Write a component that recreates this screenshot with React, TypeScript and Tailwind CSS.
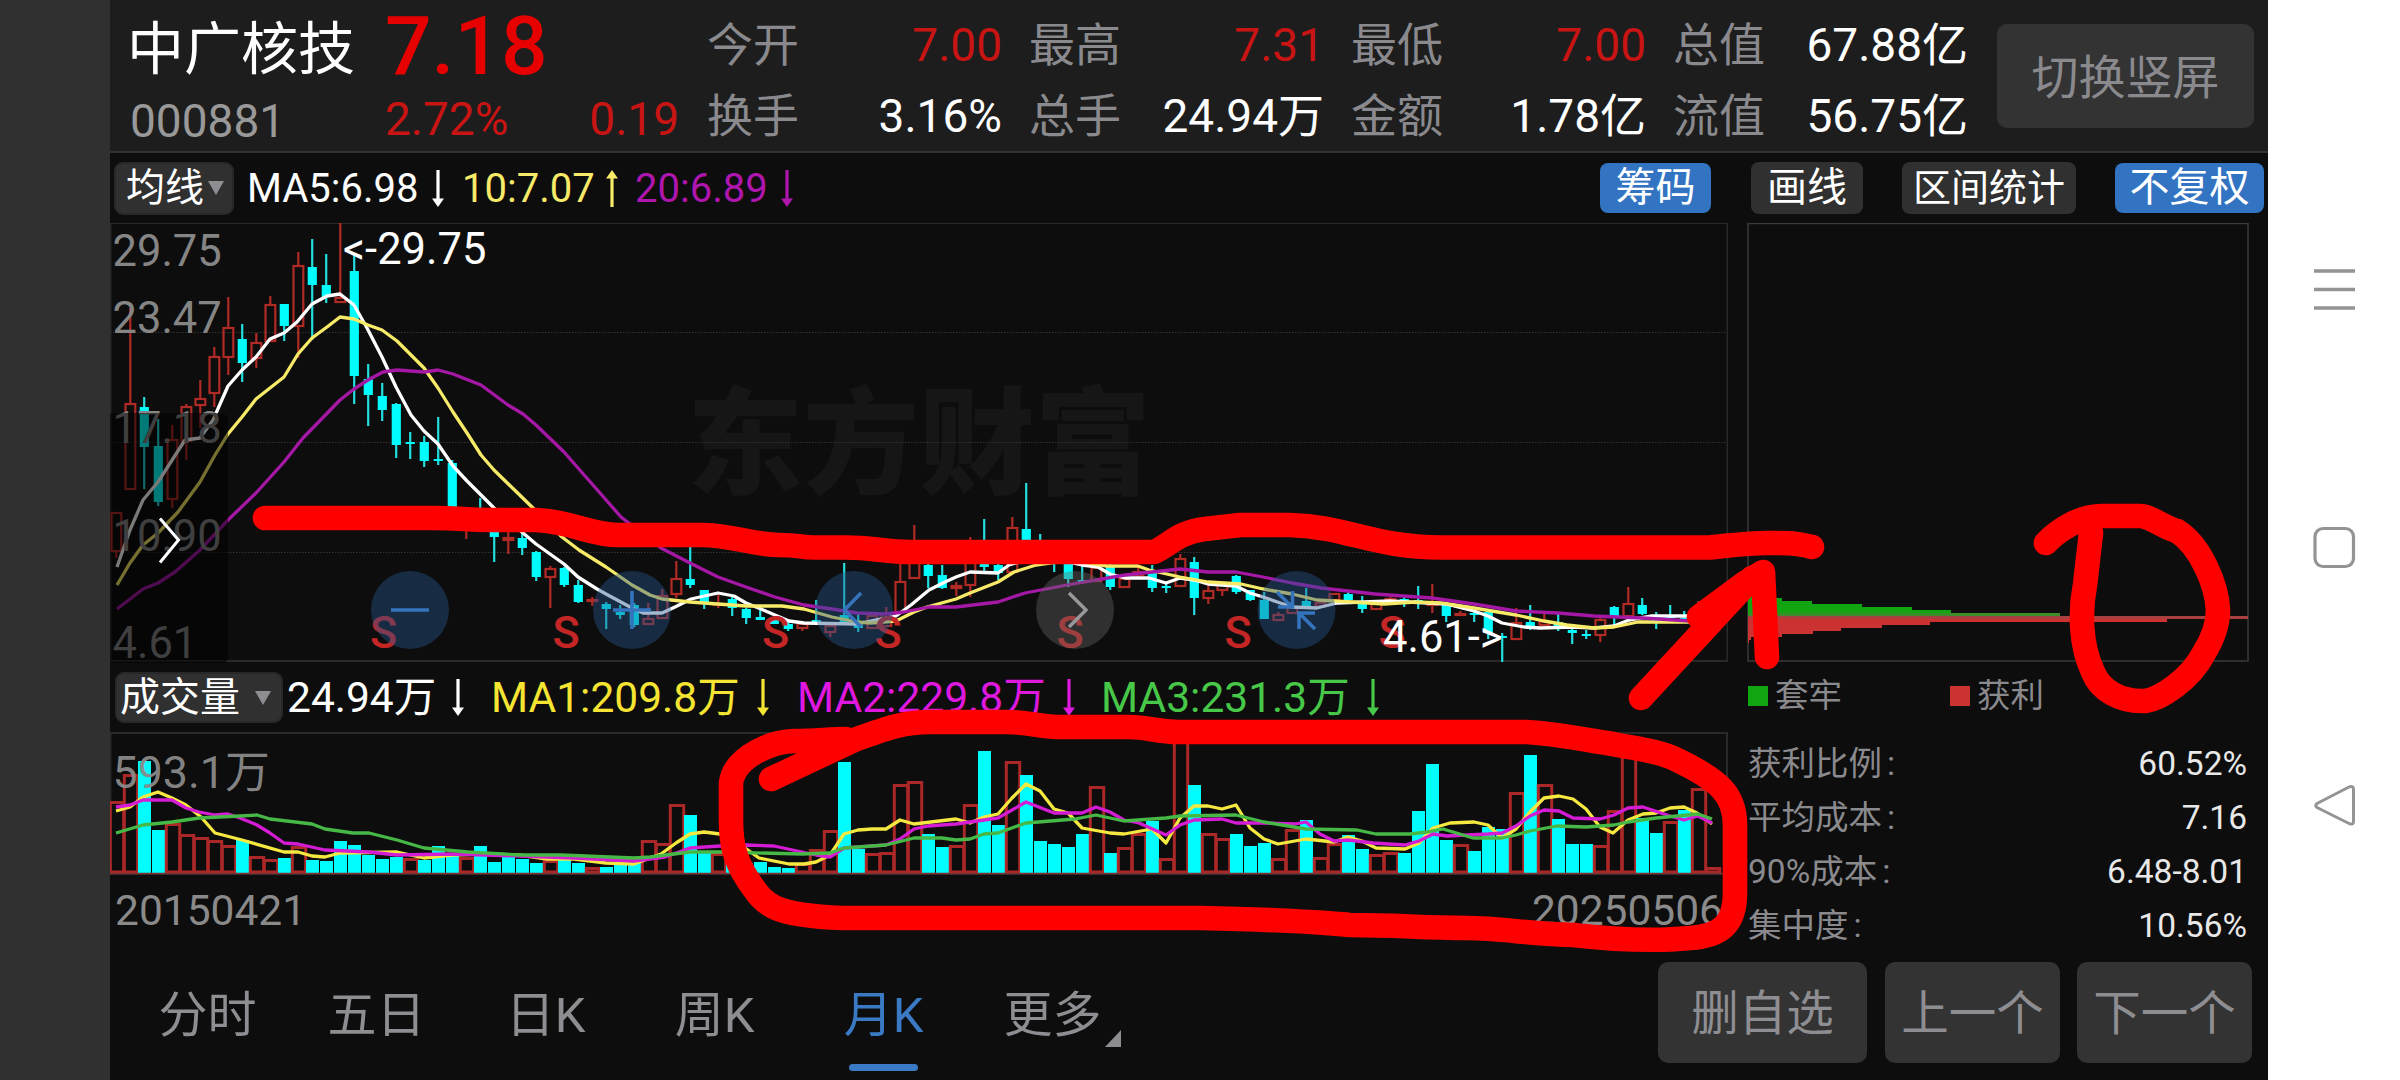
import React from 'react';

type Candle = [kind: 'r' | 'c', high: number, top: number, bottom: number, low: number];

const STEP = 14;
const FIRST_X = 116.3;

const candles: Candle[] = [
  ['r', 512, 512, 552, 558], ['r', 308, 403, 490, 490], ['c', 397, 407, 447, 489], ['c', 419, 446, 502, 506],
  ['r', 425, 439, 500, 508], ['r', 404, 406, 442, 460], ['r', 380, 398, 406, 428], ['r', 347, 356, 394, 407],
  ['r', 297, 327, 358, 375], ['c', 324, 339, 363, 382], ['r', 333, 342, 359, 368], ['r', 296, 304, 342, 342],
  ['c', 304, 304, 326, 341], ['r', 252, 265, 327, 358], ['c', 239, 267, 285, 340], ['c', 254, 285, 297, 303],
  ['r', 223, 297, 303, 303], ['c', 253, 271, 376, 404], ['c', 364, 379, 395, 426], ['c', 383, 396, 410, 421],
  ['c', 403, 404, 445, 458], ['c', 432, 442, 444, 459], ['c', 436, 442, 461, 467], ['c', 417, 459, 461, 465],
  ['c', 460, 463, 510, 510], ['r', 515, 520, 530, 539], ['c', 498, 512, 530, 530], ['c', 510, 515, 537, 562],
  ['r', 532, 537, 541, 554], ['c', 533, 538, 548, 555], ['c', 551, 552, 577, 581], ['r', 566, 568, 578, 608],
  ['c', 567, 568, 585, 587], ['c', 580, 585, 602, 603], ['r', 597, 599, 602, 606], ['c', 602, 604, 609, 629],
  ['c', 605, 612, 615, 619], ['c', 603, 605, 625, 627], ['r', 603, 618, 625, 625], ['r', 589, 595, 619, 619],
  ['r', 561, 578, 595, 598], ['c', 547, 579, 585, 588], ['c', 590, 590, 604, 609], ['r', 595, 603, 604, 608],
  ['c', 597, 599, 608, 616], ['c', 608, 609, 618, 624], ['c', 607, 617, 620, 620], ['c', 620, 620, 624, 624],
  ['c', 622, 624, 629, 631], ['r', 621, 623, 629, 631], ['c', 600, 620, 623, 623], ['r', 622, 625, 633, 637],
  ['c', 563, 615, 622, 622], ['c', 613, 625, 628, 632], ['r', 615, 615, 629, 629], ['r', 607, 613, 627, 627],
  ['r', 560, 581, 613, 613], ['r', 525, 545, 579, 579], ['c', 560, 565, 576, 588], ['c', 565, 575, 588, 589],
  ['r', 582, 585, 589, 596], ['r', 537, 560, 586, 597], ['c', 519, 550, 567, 571], ['c', 560, 565, 573, 580],
  ['r', 517, 527, 573, 573], ['c', 483, 529, 560, 560], ['c', 534, 545, 558, 560], ['c', 545, 550, 560, 572],
  ['c', 555, 560, 579, 587], ['c', 560, 580, 582, 582], ['r', 567, 567, 582, 582], ['c', 563, 565, 587, 590],
  ['r', 576, 578, 588, 588], ['r', 567, 571, 576, 578], ['c', 565, 572, 588, 592], ['c', 583, 586, 588, 593],
  ['r', 554, 558, 587, 587], ['c', 557, 562, 598, 615], ['r', 585, 590, 599, 604], ['r', 583, 583, 591, 596],
  ['c', 575, 576, 592, 594], ['c', 590, 590, 600, 601], ['c', 592, 600, 619, 619], ['r', 612, 614, 621, 621],
  ['r', 598, 607, 614, 614], ['c', 588, 601, 608, 608], ['r', 600, 602, 607, 607], ['r', 593, 593, 601, 601],
  ['c', 592, 594, 600, 600], ['c', 596, 601, 609, 613], ['r', 602, 603, 610, 610], ['r', 597, 598, 602, 603],
  ['c', 597, 599, 603, 607], ['c', 586, 600, 602, 609], ['r', 584, 603, 605, 613], ['c', 604, 604, 616, 622],
  ['r', 611, 613, 616, 616], ['c', 610, 613, 615, 622], ['c', 611, 612, 633, 639], ['c', 633, 636, 638, 662],
  ['r', 608, 622, 640, 640], ['c', 605, 622, 627, 630], ['r', 613, 621, 626, 626], ['c', 613, 622, 627, 631],
  ['c', 628, 630, 633, 644], ['c', 630, 634, 636, 639], ['r', 617, 619, 636, 642], ['c', 606, 607, 616, 625],
  ['r', 587, 603, 617, 620], ['c', 598, 605, 614, 615], ['c', 612, 620, 622, 629], ['c', 605, 616, 618, 620],
  ['c', 611, 618, 620, 621], ['r', 601, 607, 620, 620], ['r', 612, 613, 618, 618],
];

const volumes =
  'r800 r773 c760 c829 r822 r833 r836 r839 r844 c839 r855 r858 c857 r845 c859 c860 c840 c844 c854 c858 c856 r857 c859 c845 c854 r856 c845 c861 c855 c858 c862 r859 c858 c862 r866 c866 c863 c862 r839 r842 r803 c814 c852 r852 c860 c862 c861 c866 c867 r862 r848 r829 c761 c848 r852 r851 r783 r780 c833 c846 r844 r803 c750 c824 r760 c774 c840 c843 c846 c833 r785 c852 r846 r832 c820 r857 r740 c784 r832 r837 c833 c845 c842 r857 r828 c819 r856 r842 c834 c848 r853 r851 c852 c810 c763 c839 r843 c850 c826 c828 r791 c754 r783 c818 c843 c843 r844 r809 r740 c817 c832 r820 c809 r787 r866'
    .split(' ')
    .map((v) => ({ up: v[0] === 'r', top: Number(v.slice(1)) }));

const ma5 =
  '117,567 130,530 143,500 158,482 185,440 200,438 213,420 228,386 242,370 256,357 270,339 284,333 297,322 312,304 327,296 340,294 354,305 367,328 382,357 396,387 411,415 424,431 438,444 453,466 467,481 494,508 523,533 536,544 564,564 578,577 597,589 606,594 632,608 643,613 662,613 675,607 691,599 718,593 734,596 746,603 761,609 775,615 789,621 804,623 857,624 875,620 896,616 911,605 929,590 945,582 956,577 970,572 998,573 1009,565 1040,556 1082,565 1098,567 1110,574 1125,578 1149,578 1166,583 1180,578 1194,580 1208,584 1236,586 1250,593 1263,597 1292,607 1317,608 1337,603 1390,601 1446,604 1474,611 1488,616 1502,623 1524,627 1540,628 1573,627 1594,628 1614,626 1629,620 1652,616 1690,616';
const ma10 =
  '117,585 130,563 143,545 158,533 178,512 200,482 215,455 228,434 242,417 256,399 270,388 284,377 298,354 312,338 327,327 340,317 354,319 368,325 382,330 397,341 424,368 438,388 453,412 467,433 481,455 494,470 533,508 562,537 579,550 606,567 632,585 650,595 662,599 690,602 718,604 746,606 782,606 804,609 832,617 857,622 871,623 896,621 914,612 927,607 956,599 970,593 998,582 1014,572 1036,565 1070,560 1107,566 1138,566 1149,570 1180,577 1208,582 1241,584 1263,589 1292,594 1317,600 1352,602 1384,604 1415,602 1442,603 1474,608 1516,615 1544,621 1567,625 1594,628 1614,627 1638,622 1690,622';
const ma20 =
  '117,609 143,589 158,583 175,572 200,550 228,520 256,493 284,462 303,438 340,400 354,389 368,380 383,372 397,370 424,372 438,370 453,374 481,385 508,405 523,414 536,425 564,452 578,468 600,493 621,517 661,548 690,563 718,577 746,587 775,597 804,605 832,609 857,613 886,614 904,612 929,607 956,607 998,602 1025,593 1067,585 1125,575 1152,572 1180,569 1208,572 1236,572 1263,577 1292,583 1321,588 1375,594 1432,598 1474,604 1516,611 1558,613 1594,616 1643,618 1690,621';

const volMa1 =
  '116,810 130,806 143,796 158,791 172,797 186,804 201,816 215,832 242,839 284,851 298,851 312,855 325,856 340,852 397,851 424,857 452,854 480,853 519,854 547,858 574,858 606,862 634,863 661,853 676,842 690,833 704,831 720,833 732,838 745,847 759,857 789,863 804,863 816,861 830,854 844,833 858,829 872,828 886,828 900,819 914,823 956,818 970,822 984,816 998,813 1012,797 1026,783 1040,790 1054,808 1068,812 1082,827 1110,832 1124,833 1152,828 1166,842 1180,817 1194,805 1208,805 1222,808 1236,804 1250,827 1264,838 1278,843 1306,838 1334,841 1348,836 1362,840 1376,847 1405,848 1419,842 1433,827 1450,822 1474,821 1488,824 1502,837 1516,828 1530,811 1544,797 1559,795 1573,798 1586,808 1600,826 1613,832 1628,819 1643,813 1656,812 1670,807 1684,806 1697,812 1712,823';
const volMa2 =
  '116,806 130,804 143,799 172,799 186,807 199,811 215,814 228,813 240,817 257,824 270,832 284,842 298,843 325,849 369,851 397,854 452,853 519,855 574,857 634,860 665,856 690,847 720,845 746,844 774,845 802,851 816,854 830,856 844,847 886,844 900,838 914,828 928,825 956,823 998,817 1026,801 1054,812 1082,812 1096,806 1110,811 1124,819 1139,822 1166,834 1180,824 1194,819 1222,818 1236,822 1264,822 1295,823 1306,821 1320,833 1334,840 1348,839 1373,842 1405,844 1419,840 1433,833 1447,835 1488,833 1502,832 1516,825 1530,815 1544,809 1559,810 1573,817 1600,818 1614,814 1628,807 1643,806 1670,815 1684,819 1698,815 1712,822';
const volMa3 =
  '116,832 143,824 172,821 199,817 240,815 257,814 270,818 312,823 325,828 353,832 369,832 397,839 424,847 468,851 519,854 561,854 634,857 650,856 690,851 720,851 802,853 830,852 844,847 886,844 914,837 942,837 956,839 970,838 984,833 998,832 1026,822 1075,818 1096,814 1124,820 1166,817 1180,815 1236,814 1264,821 1306,828 1357,829 1376,833 1410,833 1427,831 1443,828 1473,837 1502,837 1516,834 1530,830 1557,825 1586,826 1614,824 1628,821 1656,817 1698,813 1712,818';

const quotes = [
  [{ label: '今开', value: '7.00', tone: 'text-[#c91414]' }, { label: '换手', value: '3.16%', tone: 'text-white' }],
  [{ label: '最高', value: '7.31', tone: 'text-[#c91414]' }, { label: '总手', value: '24.94万', tone: 'text-white' }],
  [{ label: '最低', value: '7.00', tone: 'text-[#c91414]' }, { label: '金额', value: '1.78亿', tone: 'text-white' }],
  [{ label: '总值', value: '67.88亿', tone: 'text-white' }, { label: '流值', value: '56.75亿', tone: 'text-white' }],
];

function Arrow({ up = false }: { up?: boolean }) {
  return (
    <svg className={up ? 'h-[37px] w-[12px] rotate-180' : 'h-[37px] w-[12px]'} viewBox="0 0 12 37" fill="currentColor">
      <path d="M4.4 0h3.2v28.500H12L6 37 0 28.500h4.400z" />
    </svg>
  );
}

function Caret() {
  return (
    <svg className="h-[14px] w-[16px] text-[#8e8e92]" viewBox="0 0 16 14" fill="currentColor">
      <path d="M0 0h16L8 14z" />
    </svg>
  );
}

function Header() {
  return (
    <header className="flex h-[153px] shrink-0 border-b-2 border-[#323232] bg-[#1d1d1d]">
      <div className="flex w-[257px] flex-col pl-[17px]">
        <div className="mt-[7px] h-[86px] text-[57px] leading-[86px] whitespace-nowrap text-white">中广核技</div>
        <div className="pl-[3px] text-[46px] leading-[56px] text-[#999]">000881</div>
      </div>
      <div className="flex w-[314px] flex-col pl-[18px]">
        <div className="-mt-[4px] h-[100px] text-[82px] leading-[100px] font-medium text-[#e60000]">7.18</div>
        <div className="-mt-[5px] flex justify-between pr-[2px] text-[46px] leading-[56px] text-[#c91414]">
          <span>2.72%</span>
          <span>0.19</span>
        </div>
      </div>
      <div className="ml-[26px] flex gap-[27px]">
        {quotes.map((col) => (
          <div key={col[0].label} className="flex w-[295px] flex-col pt-[9px]">
            {col.map((q) => (
              <div key={q.label} className="flex h-[71px] items-center justify-between text-[46px] leading-[70px] whitespace-nowrap">
                <span className="text-[#8a8a8e]">{q.label}</span>
                <span className={q.tone}>{q.value}</span>
              </div>
            ))}
          </div>
        ))}
      </div>
      <button className="mt-[24px] ml-[29px] h-[104px] w-[257px] rounded-[10px] bg-[#333] pt-[2px] text-[47px] leading-[104px] text-[#8a8a8e]">
        切换竖屏
      </button>
    </header>
  );
}

function Toolbar() {
  return (
    <div className="flex h-[70px] shrink-0 items-center text-[40px] leading-[50px] whitespace-nowrap">
      <button className="ml-[4px] flex h-[53px] w-[120px] items-center gap-[4px] rounded-[9px] border-2 border-[#282828] bg-[#303030] pl-[10px] text-[39px] text-white">
        均线
        <Caret />
      </button>
      <div className="ml-[13px] flex w-[197px] items-center justify-between pt-[1px] text-white">
        MA5:6.98 <Arrow />
      </div>
      <div className="ml-[18px] flex w-[156px] items-center justify-between pt-[1px] text-[#f7ea68]">
        10:7.07 <Arrow up />
      </div>
      <div className="ml-[17px] flex w-[158px] items-center justify-between pt-[1px] text-[#ae16ae]">
        20:6.89 <Arrow />
      </div>
      <div className="ml-auto flex items-center pr-[4px] text-white">
        <button className="h-[50px] w-[111px] rounded-[8px] bg-[#3274c2]">筹码</button>
        <button className="ml-[40px] h-[52px] w-[112px] rounded-[8px] bg-[#303030]">画线</button>
        <button className="ml-[39px] h-[52px] w-[174px] rounded-[8px] bg-[#303030] text-[38px]">区间统计</button>
        <button className="ml-[39px] h-[50px] w-[149px] rounded-[8px] bg-[#3274c2]">不复权</button>
      </div>
    </div>
  );
}

function PriceChart() {
  return (
    <svg className="block h-[440px] w-[1618px]" viewBox="110 223 1618 440">
      <text x="687" y="485" fontSize="116" fontWeight="900" fill="#161616">东方财富</text>
      <rect x="110.5" y="223" width="1617" height="438" fill="none" stroke="#292929" strokeWidth="2" />
      {[332.5, 442.5, 552.5].map((y) => (
        <line key={y} x1="110" x2="1727" y1={y} y2={y} stroke="#323232" strokeWidth="1" strokeDasharray="1.5 1.5" />
      ))}
      {candles.map(([kind, high, top, bottom, low], i) => {
        const x = FIRST_X + i * STEP;
        return kind === 'c' ? (
          <g key={i} fill="#00fcfc">
            <rect x={x - 1.2} y={high} width="2.2" height={low - high} fill="#22dede" />
            <rect x={x - 4.6} y={top} width="9.2" height={bottom - top} />
          </g>
        ) : (
          <g key={i} fill="none" stroke="#b02a26" strokeWidth="2.2">
            <path d={`M${x} ${high}V${top}M${x} ${bottom}V${low}`} />
            <rect x={x - 4.8} y={top + 1} width="9.8" height={Math.max(bottom - top - 2, 1)} />
          </g>
        );
      })}
      <g fill="none" strokeWidth="3.3" strokeLinejoin="round">
        <polyline points={ma5} stroke="#fff" />
        <polyline points={ma10} stroke="#f7ea68" />
        <polyline points={ma20} stroke="#a518a5" />
      </g>
      <g fontSize="45" fontWeight="500" fill="#c42626" textAnchor="middle">
        {[383.5, 566, 775.5, 888, 1070, 1238, 1392].map((x) => (
          <text key={x} x={x} y="648">S</text>
        ))}
      </g>
      <g fontSize="43.5" fill="#858585">
        <text x="112.500" y="266">29.75</text>
        <text x="112.500" y="333">23.47</text>
        <text x="112.500" y="442.500">17.18</text>
        <text x="112.500" y="551">10.90</text>
        <text x="112.500" y="657.500">4.61</text>
      </g>
      <g fontSize="43.5" fill="#fff">
        <text x="343" y="264">&lt;-29.75</text>
        <text x="1383" y="652">4.61-&gt;</text>
      </g>
      <path d="M110 413h110a8 8 0 0 1 8 8v236a8 8 0 0 1-8 8H110z" fill="#000" fillOpacity="0.52" />
      <path d="M160 518.500l18.500 21.500-18.500 22.500" fill="none" stroke="#fff" strokeWidth="3" />
      {[410, 632, 854, 1296.5].map((x) => (
        <circle key={x} cx={x} cy="610" r="39" fill="#265590" fillOpacity="0.42" />
      ))}
      <circle cx="1075" cy="610" r="39" fill="#666" fillOpacity="0.4" />
      <g fill="none" stroke="#3574bd" strokeWidth="3.6">
        <path d="M391 610h38M613 610h38M632 591v38M861 593l-16.500 17 16.500 17" />
        <path d="M1277 592l16 16M1278 607h16M1292.500 591v17M1315 629l-16-16M1297 613h18M1299 612v17" />
      </g>
      <path d="M1069 593l17 17-17 17" fill="none" stroke="#98989c" strokeWidth="3.400" />
    </svg>
  );
}

function VolumeHeader() {
  return (
    <div className="flex h-[69px] items-center text-[42.5px] leading-[52px] whitespace-nowrap">
      <button className="ml-[5px] flex h-[51px] w-[168px] items-center gap-[15px] rounded-[9px] border-2 border-[#282828] bg-[#303030] pl-[3px] text-[40px] text-white">
        成交量
        <Caret />
      </button>
      <div className="ml-[4px] flex w-[177px] items-center justify-between text-white">24.94万 <Arrow /></div>
      <div className="ml-[27px] flex w-[278px] items-center justify-between text-[#f5e532]">MA1:209.8万 <Arrow /></div>
      <div className="ml-[28px] flex w-[278px] items-center justify-between text-[#de18de]">MA2:229.8万 <Arrow /></div>
      <div className="ml-[26px] flex w-[278px] items-center justify-between text-[#48c848]">MA3:231.3万 <Arrow /></div>
    </div>
  );
}

function VolumeChart() {
  return (
    <svg className="block h-[143px] w-[1618px]" viewBox="110 731 1618 143">
      <rect x="110.5" y="732" width="1616.500" height="141" fill="none" stroke="#292929" strokeWidth="2" />
      {volumes.map((v, i) => {
        const x = FIRST_X + i * STEP;
        return v.up ? (
          <rect key={i} x={x - 6} y={v.top + 1.5} width="13.4" height={871 - v.top - 1.5} fill="none" stroke="#ac2828" strokeWidth="3" />
        ) : (
          <rect key={i} x={x - 6.3} y={v.top} width="13" height={872 - v.top} fill="#00fcfc" />
        );
      })}
      <line x1="110" x2="1722" y1="872.5" y2="872.5" stroke="#803030" strokeWidth="1.500" />
      <text x="112.500" y="787" fontSize="44.8" fill="#8a8a8a" fillOpacity="0.95">593.1万</text>
      <g fill="none" strokeWidth="3.3" strokeLinejoin="round">
        <polyline points={volMa1} stroke="#f5e840" />
        <polyline points={volMa2} stroke="#d41cd4" />
        <polyline points={volMa3} stroke="#46b846" />
      </g>
    </svg>
  );
}

const trapped = [[592, 4], [595, 12], [598, 34], [601, 64], [604, 114], [607, 164], [610, 203], [613, 312]];
const profit = [[616, 500], [619, 419], [622, 182], [625, 134], [628, 93], [631, 65], [634, 34], [637, 3], [640, 1]];

const stats = [
  ['获利比例', '60.52%'],
  ['平均成本', '7.16'],
  ['90%成本', '6.48-8.01'],
  ['集中度', '10.56%'],
];

function ChipPanel() {
  return (
    <aside className="w-[502px]">
      <svg className="block h-[440px] w-[502px]" viewBox="1747 223 502 440">
        <rect x="1748" y="223.5" width="500" height="437.500" fill="none" stroke="#3a3a3a" strokeWidth="1.500" />
        {trapped.map(([y, w]) => <rect key={y} x="1748" y={y} width={w} height="3" fill={y === 613 ? '#3c8c2c' : '#12a512'} />)}
        {profit.map(([y, w]) => <rect key={y} x="1748" y={y} width={w} height="3" fill={y === 616 ? '#a84040' : '#cc3232'} />)}
      </svg>
      <div className="flex h-[66px] items-center text-[33.5px] leading-[40px] text-[#8a8a8e]">
        <span className="ml-[1px] h-[20px] w-[20px] bg-[#12a512]" />
        <span className="ml-[7px]">套牢</span>
        <span className="ml-[108px] h-[20px] w-[20px] bg-[#cc3232]" />
        <span className="ml-[7px]">获利</span>
      </div>
      <dl className="mt-[8px] text-[33.5px]">
        {stats.map(([label, value]) => (
          <div key={label} className="flex h-[54px] items-center justify-between pr-[2px] pl-[1px] leading-[54px]">
            <dt className="text-[#8a8a8e]">
              {label}
              <span className="ml-[5px]">:</span>
            </dt>
            <dd className="text-[#e8e8e8]">{value}</dd>
          </div>
        ))}
      </dl>
    </aside>
  );
}

function PeriodTabs() {
  return (
    <nav className="flex h-[121px] shrink-0 items-center text-[49px] leading-[60px] whitespace-nowrap text-[#8e8e92]">
      <div className="ml-[13px] flex pt-[6px]">
        {['分时', '五日', '日K', '周K', '月K', '更多'].map((tab) => (
          <button
            key={tab}
            className={tab === '月K' ? 'relative w-[169px] text-[#3a7ac4]' : 'relative w-[169px]'}
          >
            {tab}
            {tab === '月K' && <span className="absolute -bottom-[25px] left-[50px] h-[7px] w-[69px] rounded-full bg-[#3a7ac4]" />}
            {tab === '更多' && (
              <svg className="absolute right-[16px] -bottom-[1px] h-[17px] w-[16px]" viewBox="0 0 16 17" fill="currentColor">
                <path d="M16 0v17H0z" />
              </svg>
            )}
          </button>
        ))}
      </div>
      <div className="ml-auto flex pr-[16px] text-[47.5px]">
        <button className="h-[101px] w-[209px] rounded-[10px] bg-[#333] pt-[3px]">删自选</button>
        <button className="ml-[18px] h-[101px] w-[175px] rounded-[10px] bg-[#333] pt-[3px]">上一个</button>
        <button className="ml-[17px] h-[101px] w-[175px] rounded-[10px] bg-[#333] pt-[3px]">下一个</button>
      </div>
    </nav>
  );
}

function SystemBar() {
  return (
    <div className="flex w-[132px] flex-col bg-white pl-[45px] text-[#949494]">
      <svg className="mt-[268px] h-[42px] w-[42px]" viewBox="0 0 42 42" stroke="currentColor" strokeWidth="3.500">
        <path d="M1 3h41M1 21.500h41M1 40h41" />
      </svg>
      <svg className="mt-[216px] h-[43px] w-[43px]" viewBox="0 0 43 43" fill="none" stroke="currentColor" strokeWidth="3.200">
        <rect x="2" y="2.500" width="38.500" height="38" rx="8" />
      </svg>
      <svg className="mt-[216px] h-[44px] w-[43px]" viewBox="0 0 43 44" fill="none" stroke="currentColor" strokeWidth="3" strokeLinejoin="round">
        <path d="M4 18.500L35 2.500Q40.500 0 40.500 4V36Q40.500 41 35 38L4 22.500Q1.500 20.500 4 18.500Z" />
      </svg>
    </div>
  );
}

function Annotations() {
  return (
    <svg
      className="pointer-events-none absolute inset-0 h-[1080px] w-[2400px]"
      viewBox="0 0 2400 1080"
      fill="none"
      stroke="#ff0000"
      strokeWidth="24.600"
      strokeLinecap="round"
      strokeLinejoin="round"
    >
      <path d="M265 518H433C460 518 465 520 490 520H536C570 521 590 535 618 535H704C735 536 755 545 779 545C800 545 800 547.500 814 547.500H843C870 547 885 552 911 552H1154C1170 545 1178 532 1205 529L1240 525H1290C1350 527 1370 547 1442 547.500H1710C1735 545 1750 542.500 1771 543C1795 543 1800 544 1812 547" />
      <path d="M1641 698L1752 578M1699 617L1745 583L1763 572L1767 657" />
      <path d="M771 779L854 740C890 727 905 722 930 722H1007C1030 722 1040 727 1062 727H1129C1150 727 1155 732 1179 732H1527C1560 734 1590 741 1613 744C1630 748 1655 750 1673 758C1720 780 1735 795 1735 825V893C1735 925 1720 936 1690 938C1650 942 1600 938 1573 935C1530 934 1500 928 1467 928C1420 928 1400 925 1350 925C1310 922 1300 920 1200 918H843C770 915 765 905 748 880C735 860 731 845 731 820V783C735 755 775 741 795 741C815 741 830 739 846 739" />
      <path d="M2046 543C2058 530 2080 516 2102 516H2140C2150 516 2165 528 2177 531C2200 545 2217 585 2218 610C2218 625 2212 640 2204 653C2190 680 2160 699 2145 701C2120 702 2100 690 2093 672C2080 645 2080 610 2085 585L2091 533" />
    </svg>
  );
}

export default function App() {
  return (
    <div className="relative flex h-[1080px] w-[2400px] overflow-hidden bg-[#0d0d0d] font-['Roboto','Noto_Sans_CJK_SC',sans-serif]">
      <div className="w-[110px] shrink-0 bg-[#303030]" />
      <main className="flex w-[2158px] shrink-0 flex-col">
        <Header />
        <Toolbar />
        <div className="flex h-[729px] shrink-0 gap-[19px]">
          <section className="w-[1618px]">
            <PriceChart />
            <VolumeHeader />
            <VolumeChart />
            <div className="mt-[11px] flex justify-between pr-[5px] pl-[5px] text-[42.5px] leading-[50px] text-[#8a8a8a]">
              <span>20150421</span>
              <span>20250506</span>
            </div>
          </section>
          <ChipPanel />
        </div>
        <PeriodTabs />
      </main>
      <SystemBar />
      <Annotations />
    </div>
  );
}
